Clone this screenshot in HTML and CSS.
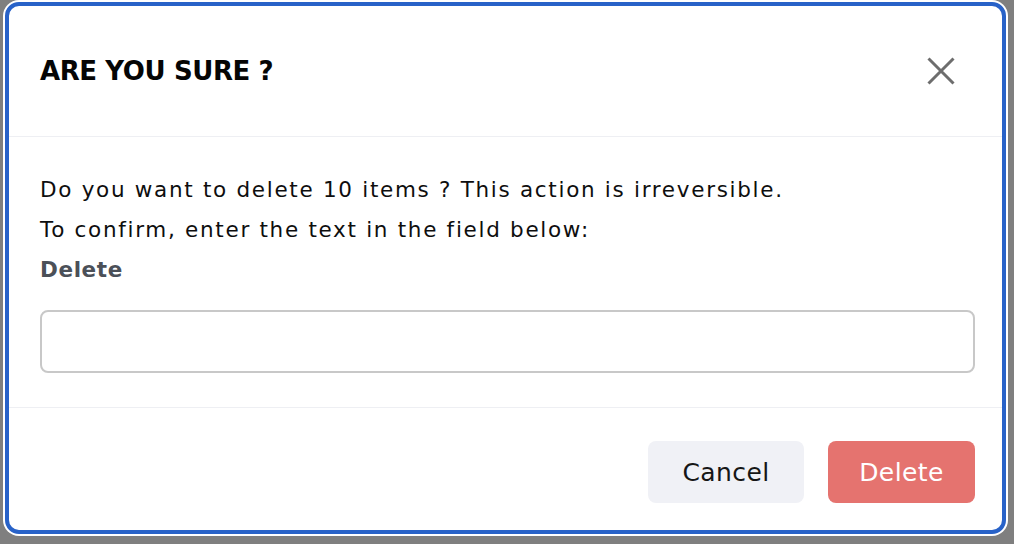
FILE: index.html
```html
<!DOCTYPE html>
<html lang="en">
<head>
<meta charset="utf-8">
<title>Are you sure?</title>
<link rel="stylesheet" href="styles.css">
</head>
<body>
<div class="backdrop">
  <div class="modal" role="dialog" aria-labelledby="modal-title">
    <header class="modal-header">
      <h2 id="modal-title" class="modal-title">ARE YOU SURE ?</h2>
      <button class="close-btn" aria-label="Close">
        <svg width="28" height="28" viewBox="0 0 28 28" aria-hidden="true">
          <path d="M1.5 1.5 L26.5 26.5 M26.5 1.5 L1.5 26.5" stroke="#6d6d6d" stroke-width="3" fill="none"/>
        </svg>
      </button>
    </header>
    <div class="modal-body">
      <p class="line">Do you want to delete 10 items ? This action is irreversible.</p>
      <p class="line">To confirm, enter the text in the field below:</p>
      <p class="confirm-word">Delete</p>
      <input class="confirm-input" type="text" aria-label="Confirmation text">
    </div>
    <footer class="modal-footer">
      <button class="btn btn-cancel">Cancel</button>
      <button class="btn btn-delete">Delete</button>
    </footer>
  </div>
</div>
</body>
</html>
```
FILE: styles.css
```css
html, body {
  margin: 0;
  padding: 0;
  height: 100%;
}
body {
  background: #7f7f7f;
  font-family: "DejaVu Sans", "Noto Sans", sans-serif;
  color: #111;
}
.backdrop {
  padding: 2px 8px 10px 5px;
  box-sizing: border-box;
  height: 100%;
}
.modal {
  box-sizing: border-box;
  height: 532px;
  background: #fff;
  border: 4px solid #2862c8;
  border-radius: 14px;
  box-shadow: 0 0 0 2px #fff;
  display: flex;
  flex-direction: column;
}
.modal-header {
  height: 131px;
  box-sizing: border-box;
  border-bottom: 1px solid #eeeff3;
  display: flex;
  align-items: center;
  justify-content: space-between;
  padding: 0 47px 0 31px;
}
.modal-title {
  margin: 0;
  font-size: 26px;
  font-weight: 700;
  letter-spacing: -0.4px;
  color: #050505;
}
.close-btn {
  border: 0;
  background: none;
  padding: 0;
  width: 28px;
  height: 28px;
  display: flex;
}
.modal-body {
  padding: 33px 27px 34px 31px;
  border-bottom: 1px solid #eeeff3;
}
.line {
  margin: 0;
  font-size: 21.5px;
  line-height: 40px;
  letter-spacing: 1.7px;
  color: #0e0e0e;
}
.confirm-word {
  margin: 0;
  font-size: 21.5px;
  line-height: 40px;
  font-weight: 700;
  letter-spacing: 0.6px;
  color: #4b5058;
}
.confirm-input {
  display: block;
  box-sizing: border-box;
  width: 100%;
  height: 63px;
  margin-top: 20px;
  border: 2px solid #c8c8c8;
  border-radius: 8px;
  background: #fff;
  font: inherit;
}
.modal-footer {
  flex: 1;
  display: flex;
  justify-content: flex-end;
  align-items: flex-start;
  gap: 24px;
  padding: 33px 27px 0 31px;
}
.btn {
  height: 62px;
  border: 0;
  border-radius: 8px;
  font-family: inherit;
  font-size: 25px;
  letter-spacing: 0.4px;
  padding: 0;
}
.btn-cancel {
  width: 156px;
  background: #f0f1f6;
  color: #161616;
}
.btn-delete {
  width: 147px;
  background: #e5736f;
  color: #fff;
}
```
